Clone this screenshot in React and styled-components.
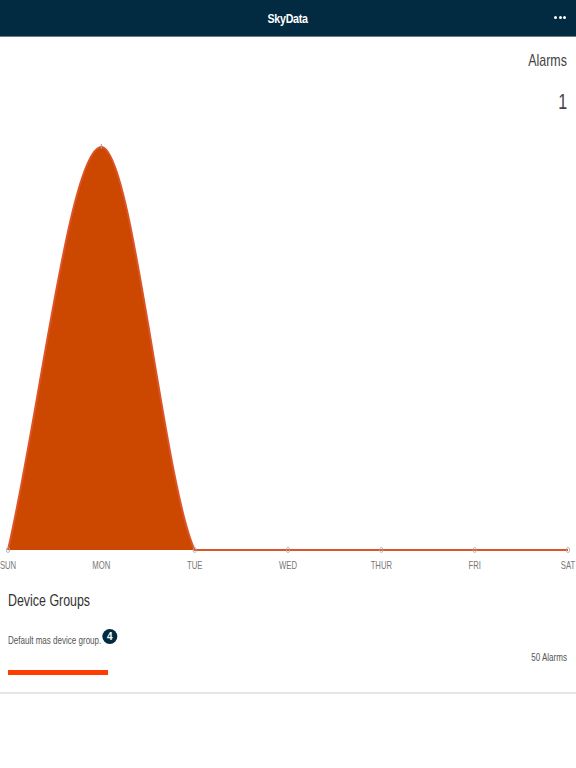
import React from "react";
import styled, { createGlobalStyle } from "styled-components";

const GlobalStyle = createGlobalStyle`
  body {
    margin: 0;
    background: #fff;
    font-family: "Liberation Sans", Arial, sans-serif;
  }
`;

const days = ["SUN", "MON", "TUE", "WED", "THUR", "FRI", "SAT"];
const counts = [0, 1, 0, 0, 0, 0, 0];

const CHART_W = 576;
const CHART_H = 460;
const BASE = 430;
const TOP = 27;
const LEFT = 8;
const STEP = 560 / 6;
const NARROW = 0.73;

// cardinal-ish spline, flat runs stay straight so nothing dips under the axis
const buildCurve = (points) =>
  points
    .map((p, i) => {
      if (i === 0) return `M${p[0]},${p[1]}`;
      const prev = points[i - 1];
      if (prev[1] === p[1]) return `L${p[0]},${p[1]}`;
      const dx = p[0] - prev[0];
      const dy = p[1] - prev[1];
      const rising = dy < 0;
      const c1 = rising ? [prev[0] + dx / 3, prev[1] + dy / 3] : [prev[0] + dx / 3, prev[1]];
      const c2 = rising ? [p[0] - dx / 3, p[1]] : [p[0] - dx / 3, p[1] - dy / 6];
      return `C${c1[0]},${c1[1]} ${c2[0]},${c2[1]} ${p[0]},${p[1]}`;
    })
    .join(" ");

const App = () => {
  const points = counts.map((c, i) => [LEFT + i * STEP, BASE - c * (BASE - TOP)]);
  const curve = buildCurve(points);

  return (
    <>
      <GlobalStyle />
      <Header>
        <Title>SkyData</Title>
        <MoreButton>
          <span />
          <span />
          <span />
        </MoreButton>
      </Header>

      <Stats>
        <StatLabel>Alarms</StatLabel>
        <StatValue>1</StatValue>
      </Stats>

      <Chart viewBox={`0 0 ${CHART_W} ${CHART_H}`} width={CHART_W} height={CHART_H}>
        <path d={`${curve} L${LEFT},${BASE} Z`} fill="#cc4700" />
        <path d={curve} fill="none" stroke="#dd5428" strokeWidth="2" />
        {points.map(([x, y], i) =>
          counts[i] ? (
            <line key={i} x1={x} y1={y - 3} x2={x} y2={y + 2} stroke="#999" strokeWidth="1" />
          ) : (
            <ellipse key={i} cx={x} cy={y} rx="1.6" ry="2.6" fill="none" stroke="#aaa" strokeWidth="0.8" />
          )
        )}
        {days.map((d, i) => (
          <text
            key={d}
            transform={`translate(${LEFT + i * STEP} ${BASE + 19}) scale(0.77 1)`}
            fontSize="10"
            fill="#777"
            textAnchor="middle"
            fontFamily="Liberation Sans, Arial, sans-serif"
          >
            {d}
          </text>
        ))}
      </Chart>

      <Groups>
        <GroupsTitle>
          <Narrow $origin="left">Device Groups</Narrow>
        </GroupsTitle>
        <GroupRow>
          <GroupName>
            <Narrow $origin="left">
              Default mas device group.
              <Badge>4</Badge>
            </Narrow>
          </GroupName>
          <GroupAlarms>
            <Narrow $origin="right">50 Alarms</Narrow>
          </GroupAlarms>
          <Bar $width={100} />
        </GroupRow>
      </Groups>
    </>
  );
};

const Narrow = styled.span`
  display: inline-block;
  white-space: nowrap;
  transform: scaleX(${NARROW});
  transform-origin: ${(p) => p.$origin} center;
`;

const Header = styled.header`
  height: 36px;
  background: #022a41;
  border-bottom: 1px solid #6b7c88;
  display: flex;
  align-items: center;
  justify-content: center;
  position: relative;
`;

const Title = styled.h1`
  margin: 0;
  color: #fff;
  font-size: 13px;
  font-weight: 700;
  letter-spacing: -0.3px;
  transform: scaleX(0.82);
`;

const MoreButton = styled.div`
  position: absolute;
  right: 10px;
  top: 16px;
  display: flex;
  gap: 1.5px;

  span {
    width: 3px;
    height: 3px;
    border-radius: 50%;
    background: #fff;
  }
`;

const Stats = styled.div`
  display: flex;
  flex-direction: column;
  align-items: flex-end;
  padding: 13px 9px 0 0;
  color: #444;
`;

const StatLabel = styled.div`
  font-size: 17px;
  line-height: 22px;
  transform: scaleX(${NARROW});
  transform-origin: right center;
`;

const StatValue = styled.div`
  font-size: 22px;
  line-height: 24px;
  margin-top: 18px;
  transform: scaleX(${NARROW});
  transform-origin: right center;
`;

const Chart = styled.svg`
  display: block;
  margin-top: 6px;
`;

const Groups = styled.section`
  margin-top: 10px;
`;

const GroupsTitle = styled.h2`
  margin: 0;
  padding: 0 8px;
  font-size: 17px;
  font-weight: 400;
  line-height: 22px;
  color: #333;
`;

const GroupRow = styled.div`
  display: flex;
  flex-direction: column;
  padding: 10px 8px 17px;
  border-bottom: 2px solid #e5e5e5;
`;

const GroupName = styled.div`
  font-size: 11px;
  line-height: 14px;
  color: #555;
  padding-top: 7px;
`;

const Badge = styled.span`
  display: inline-flex;
  align-items: center;
  justify-content: center;
  width: 15px;
  height: 15px;
  margin-left: 4px;
  border-radius: 50%;
  background: #022a41;
  color: #fff;
  font-size: 10px;
  font-weight: 700;
  vertical-align: 4px;
  transform: scaleX(${1 / NARROW});
`;

const GroupAlarms = styled.div`
  align-self: flex-end;
  font-size: 11px;
  line-height: 14px;
  color: #555;
  margin-top: 3px;
  margin-right: 1px;
`;

const Bar = styled.div`
  width: ${(p) => p.$width}px;
  height: 5px;
  margin-top: 6px;
  background: #ff3d00;
`;

export default App;
